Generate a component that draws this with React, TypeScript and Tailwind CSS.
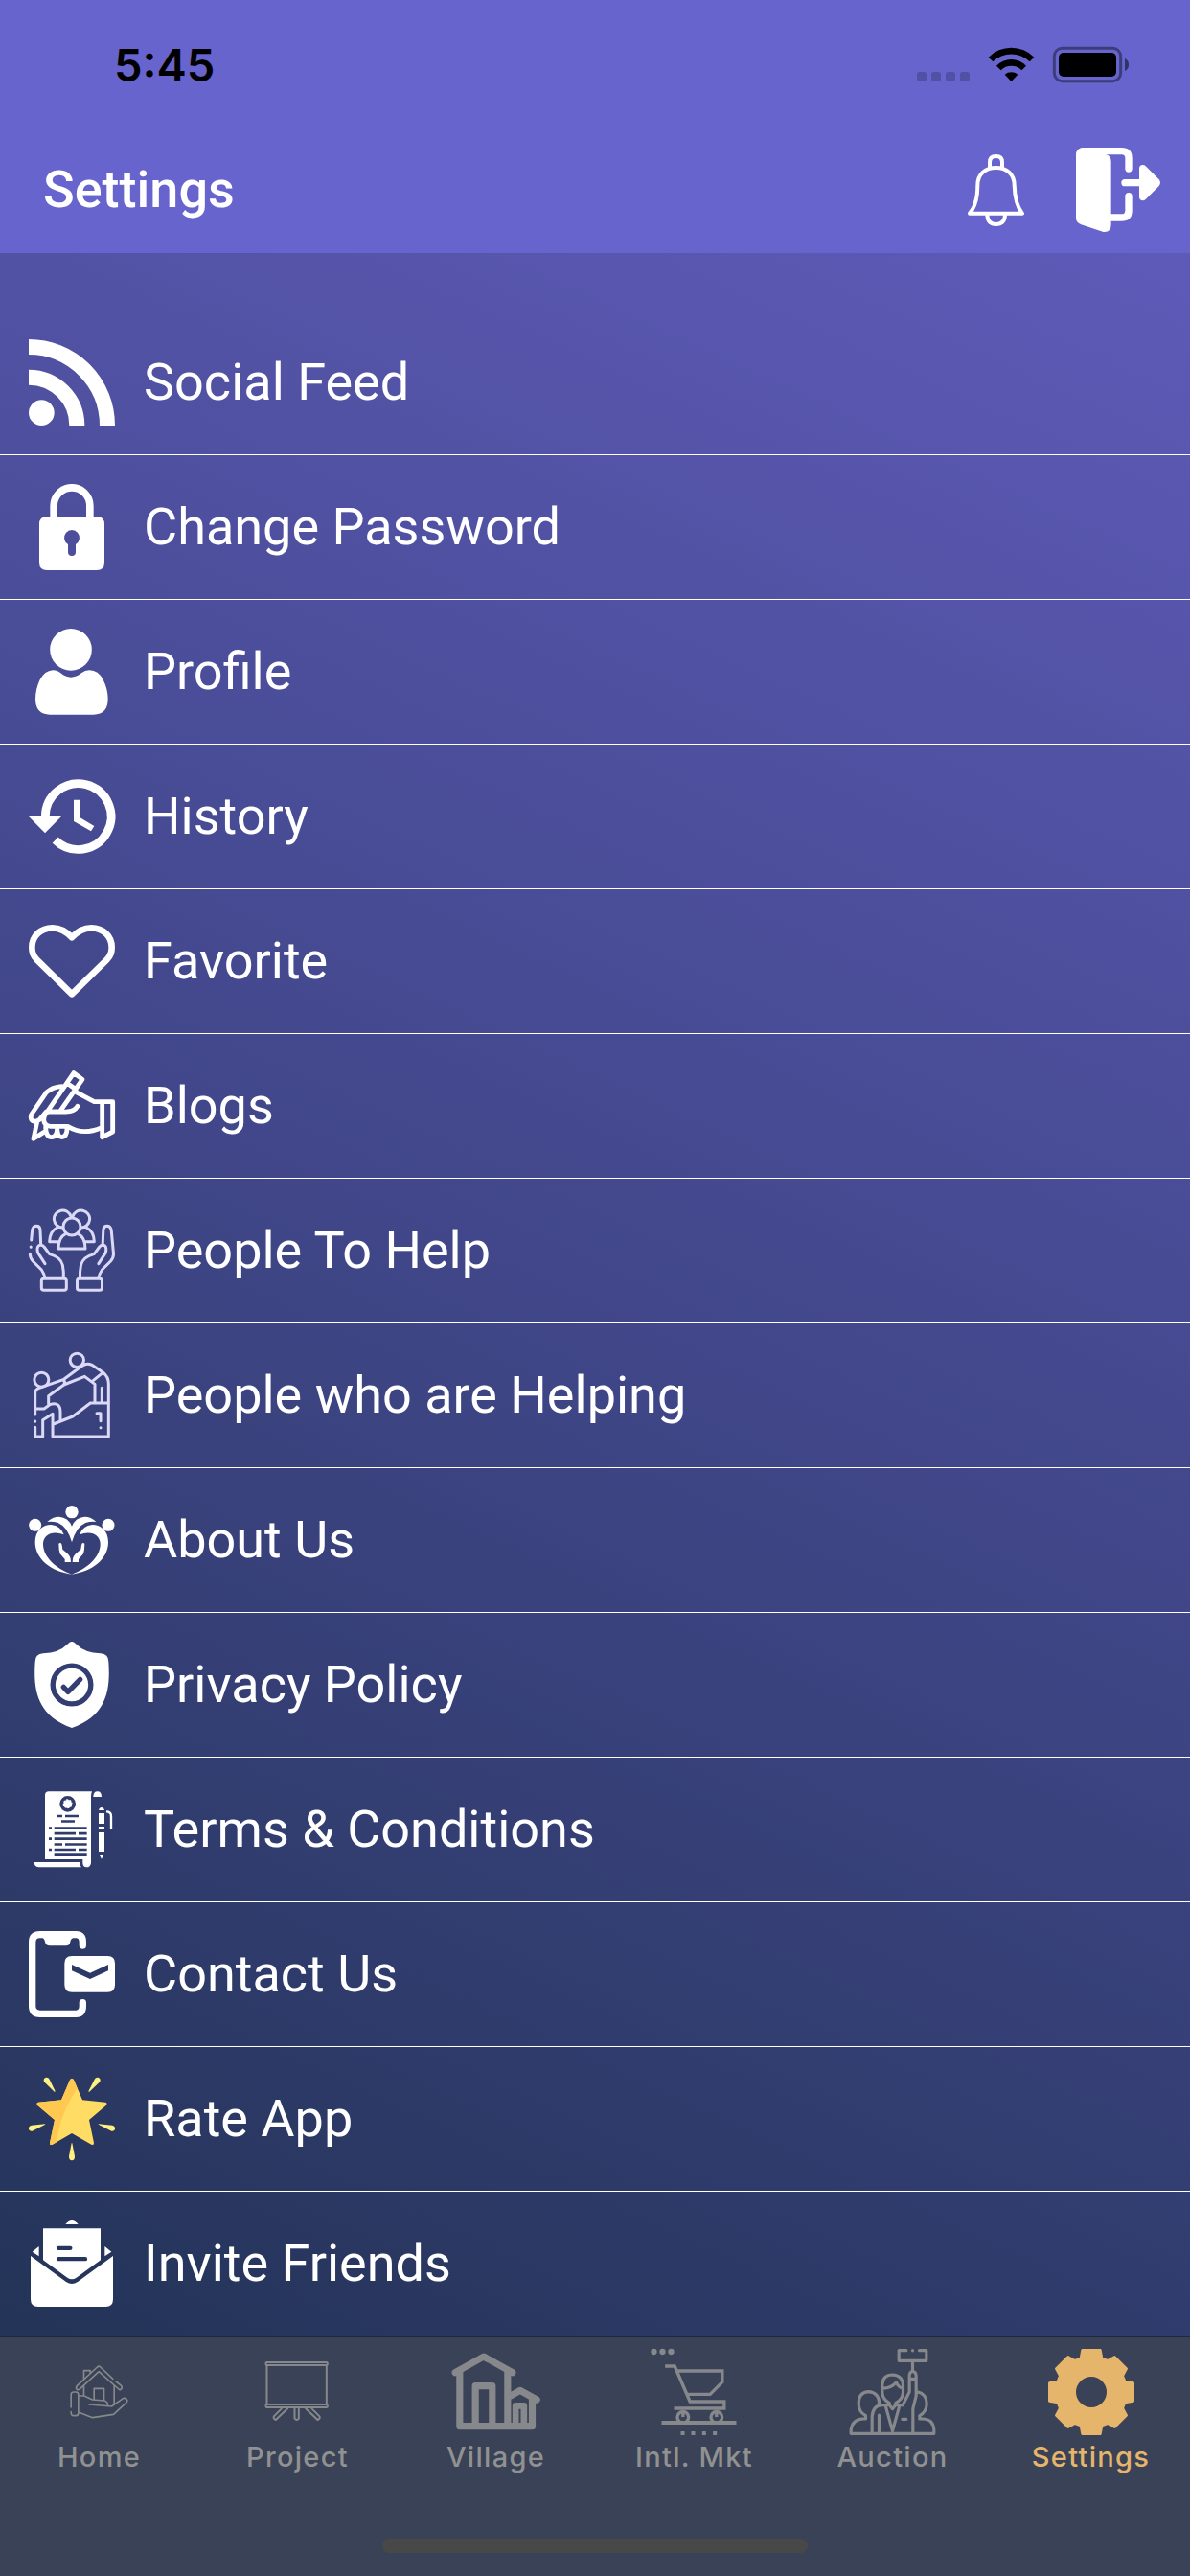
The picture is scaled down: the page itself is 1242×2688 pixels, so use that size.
import type { ReactNode } from "react";

type IconProps = { box: string; children: ReactNode; size?: string };

function Icon({ box, children, size = "size-[90px]" }: IconProps) {
  return (
    <svg viewBox={box} className={size + " shrink-0 overflow-visible"} fill="currentColor" aria-hidden="true">
      {children}
    </svg>
  );
}

type LineProps = { w: number; d: string; butt?: boolean };

function Line({ w, d, butt }: LineProps) {
  return (
    <path
      d={d}
      fill="none"
      stroke="currentColor"
      strokeWidth={w}
      strokeLinecap={butt ? "butt" : "round"}
      strokeLinejoin={butt ? "miter" : "round"}
    />
  );
}

const FeedIcon = () => (
  <Icon box="90 72 270 270">
    <Line butt w={48} d="M90 96A246 246 0 0 1 336 342M90 191A151 151 0 0 1 241 342" />
    <circle cx="130" cy="302" r="40" />
  </Icon>
);

const LockIcon = () => (
  <Icon box="90 525 270 270">
    <Line butt w={23} d="M168.500 632V593A56.500 56.500 0 0 1 281.500 593V632" />
    <path
      fillRule="evenodd"
      d="M147 627H303Q327 627 327 651V771Q327 795 303 795H147Q123 795 123 771V651Q123 627 147 627ZM213 714V738A12 12 0 0 0 237 738V714A24 24 0 1 0 213 714Z"
    />
  </Icon>
);

const ProfileIcon = () => (
  <Icon box="90 978 270 270">
    <circle cx="222" cy="1043.500" r="65.500" />
    <path d="M165 1108Q180 1108 190 1117Q222 1143 255 1117Q266 1108 280 1108Q308 1108 323 1138Q338 1168 338 1198Q338 1247 293 1247H156Q111 1247 111 1198Q111 1168 125 1138Q140 1110 165 1108Z" />
  </Icon>
);

const HistoryIcon = () => (
  <Icon box="90 81 270 270">
    <Line butt w={26} d="M142 218A103 103 0 1 1 173 290" />
    <path d="M90 216H192L141 268ZM231 164H251V220L295 246L285 262L231 231Z" />
  </Icon>
);

const HeartIcon = () => (
  <Icon box="90 534 270 270">
    <Line
      w={20}
      d="M225 772L115 664Q100 648 100 626C100 590 128 565 164 565Q198 565 225 595Q252 565 286 565C322 565 350 590 350 626Q350 648 335 664Z"
    />
  </Icon>
);

const BlogIcon = () => (
  <Icon box="90 987 270 270">
    <Line
      w={14.5}
      d="M148 1140L231 1019L258 1039L190 1136M212 1052L238 1070M194 1061Q163 1063 145 1080L98 1149Q92 1170 112 1171L124 1165L143 1142M146 1140H200Q232 1142 243 1123M238 1079L295 1109H353V1203L320 1220V1109M318 1190Q258 1216 212 1186H158Q137 1184 137 1164Q138 1150 148 1142M116 1172L105 1225L138 1204M143 1188Q144 1220 161 1220Q179 1220 179 1192Q180 1220 194 1220Q210 1218 210 1192"
    />
  </Icon>
);

const HandLeft = () => (
  <Line
    w={9}
    d="M141 266L119 232Q114 215 122 209Q131 205 138 213L155 236Q190 245 196 270Q200 290 199 312M94 235Q94 248 103 258L130 285Q139 298 141 312M138 313H201Q208 313 208 320V342Q208 349 201 349H138Q130 349 130 342V320Q130 313 138 313Z"
  />
);

const PeopleIcon = () => (
  <Icon box="90 90 270 270">
    <g className="text-[#dcd9f8]">
      <HandLeft />
      <Line w={9} d="M98 192L101 160Q104 148 114 148Q125 148 126 160L128 205M96.500 213V213.500" />
      <g transform="translate(449.500 0) scale(-1 1)">
        <HandLeft />
        <Line w={9} d="M94 235L101 160Q104 148 114 148Q125 148 126 160L128 205" />
      </g>
      <circle cx="225" cy="150" r="27" fill="none" stroke="currentColor" strokeWidth="9" />
      <Line
        w={9}
        d="M196 153A27 27 0 1 1 222 118M254 153A27 27 0 1 0 228 118M179 153Q156 164 155 197H186M271 153Q294 164 295 197H264M205 173Q183 184 183 219H267Q267 184 245 173"
      />
    </g>
  </Icon>
);

const HelpingIcon = () => (
  <Icon box="90 543 270 270">
    <g className="text-[#dcd9f8]">
      <g fill="none" stroke="currentColor" strokeWidth="9">
        <circle cx="130" cy="629" r="22.500" />
        <circle cx="241" cy="568" r="21.500" />
      </g>
      <Line
        w={9}
        d="M110 738V672Q110 659 123 655L198 629L258 585Q272 575 288 583L322 606Q340 620 340 642V807H165V736L134 755V807H110V778M110 759V759.500M110 720H138L158 706Q189 698 189 730V757M198 629Q206 637 200 645L152 680V706M200 645L265 619L297 643V700M288 635L322 607M167 768L228 744L283 702H340M319 655V700M303 734H315V758M315 779V779.500"
      />
    </g>
  </Icon>
);

const AboutHalf = () => (
  <>
    <circle cx="110" cy="184" r="19.500" />
    <path d="M225 338C160 330 110 290 110 238C110 200 135 183 160 183Q190 186 200 214Q180 206 165 209C145 212 134 228 135 246C137 285 175 320 225 338Z" />
    <path d="M184 242Q192 237 194 247L196 260L211 273Q222 282 222 300H203V291L188 274Q184 262 184 242Z" />
  </>
);

const AboutIcon = () => (
  <Icon box="90 96 270 270">
    <circle cx="225" cy="143" r="20" />
    <AboutHalf />
    <g transform="translate(449 0) scale(-1 1)">
      <AboutHalf />
    </g>
    <path d="M148 174Q165 158 185 158Q214 160 225 188Q236 160 265 158Q285 158 301 174Q284 172 268 177Q238 190 225 238Q212 190 182 177Q165 172 148 174Z" />
  </Icon>
);

const ShieldIcon = () => (
  <Icon box="90 549 270 270">
    <mask id="shield-check" maskUnits="userSpaceOnUse" x="90" y="549" width="270" height="270">
      <rect x="90" y="549" width="270" height="270" fill="white" />
      <g fill="none" stroke="black" strokeWidth="16">
        <circle cx="225" cy="684" r="59.500" />
        <path d="M199 691L213 706L251 667" strokeLinecap="round" strokeLinejoin="round" />
      </g>
    </mask>
    <path
      mask="url(#shield-check)"
      d="M225 548Q232 549 240 558Q265 584 315 586Q340 588 340 612C346 700 335 780 225 819C115 780 104 700 110 612Q110 588 135 586Q185 584 210 558Q218 549 225 548Z"
    />
  </Icon>
);

const TermsIcon = () => (
  <Icon box="90 102 270 270">
    <mask id="terms-lines" maskUnits="userSpaceOnUse" x="90" y="102" width="270" height="270">
      <rect x="90" y="102" width="270" height="270" fill="white" />
      <g fill="none" stroke="black" strokeWidth="8">
        <circle cx="212" cy="157" r="20" strokeWidth="10" />
        <circle cx="212" cy="157" r="15" strokeWidth="4" strokeDasharray="5 6.780" />
        <path d="M178 195H195M204 195H246M192 211.500H234M153 232.500H162M170 232.500H272M170 249.500H237M246 249.500H272M153 266H162M170 266H272M170 283.500H195M204 283.500H272M153 300H162M170 300H237M246 300H272M170 317H272" />
      </g>
    </mask>
    <path
      mask="url(#terms-lines)"
      d="M141 130Q141 118 153 118H288Q285 125 285 135V341Q283 355 271 355Q259 353 259 341V330H141Z"
    />
    <path d="M107 339H249Q249 350 255 355H121Q107 353 107 339ZM292 135Q292 118 305 118Q318 118 318 135ZM309 186H327V219H309ZM309 228H327V237H309ZM309 246H327V309H309ZM312 318H324L318 329ZM309 177Q311 168 318 168Q325 168 327 177Z" />
    <Line butt w={7} d="M333 181Q348 181 348 195V237" />
  </Icon>
);

const ContactIcon = () => (
  <Icon box="90 555 270 270">
    <Line w={22} d="M259 600V590Q259 566 238 566H125Q101 566 101 590V790Q101 814 125 814H238Q259 814 259 790V779" />
    <path d="M124 570Q139 576 141 588Q143 601 156 601H206Q219 601 220 588Q222 576 237 574V562H124Z" />
    <path
      fillRule="evenodd"
      d="M225 633H337Q360 633 360 656V723Q360 746 337 746H225Q202 746 202 723V656Q202 633 225 633ZM225 660V679L282 705L339 679V660L282 686Z"
    />
  </Icon>
);

const StarIcon = () => (
  <Icon box="90 108 270 270">
    <clipPath id="star-shape">
      <path d="M219 121Q225 112 231 121L258 184L330 191Q338 193 333 200L279 246L294 318Q294 327 286 323L225 288L164 323Q155 327 156 318L171 246L117 200Q112 193 120 191L192 184Z" />
    </clipPath>
    <g clipPath="url(#star-shape)">
      <rect x="100" y="108" width="250" height="230" fill="#ffdc64" />
      <path d="M100 100H225L243 147Q187 225 175 330H100Z" fill="#ffc850" />
    </g>
    <path
      fill="#fff082"
      d="M171 159L138 127Q134 117 144 113Q152 112 155 119L173 157ZM279 159L313 127Q317 117 307 113Q299 112 296 119L277 157ZM141 259L98 263Q88 266 90 276Q93 283 101 281L142 260ZM309 259L352 263Q362 266 360 276Q357 283 349 281L308 260ZM224 319L216 360Q216 373 225 373Q234 373 234 360L226 319Z"
    />
  </Icon>
);

const InviteIcon = () => (
  <Icon box="90 561 270 270">
    <path d="M96 672L207 753Q225 765 243 753L354 672V808Q354 831 331 831H119Q96 831 96 808Z" />
    <path
      fillRule="evenodd"
      d="M135 586H315V685L238 741Q225 749 212 741L135 685ZM183 641A6.500 6.500 0 0 0 183 654H220A6.500 6.500 0 0 0 220 641ZM183 675A6.500 6.500 0 0 0 183 688H267A6.500 6.500 0 0 0 267 675Z"
    />
    <path d="M101 659L122 642V673ZM349 659L328 642V673ZM205 573Q225 549 245 573Z" />
  </Icon>
);

const HomeIcon = () => (
  <Icon box="175.500 93 270 270">
    <Line
      w={5}
      d="M221 276V236Q221 228 229 228H236Q244 228 244 236V294Q244 302 236 302H229Q221 302 221 290M240 221Q234 215 240 208L303 150Q308 145 313 150L352 187M240 221Q246 222 250 217L308 164L370 219Q375 224 380 216Q381 211 378 208L362 195M261 188V161H281V170M261 209V238M356 208V266M293 251V217H324V254M246 240H262L288 252L325 255Q336 258 336 270M278 267L348 273L384 248Q394 245 397 254Q397 259 393 262L354 298L288 308L246 292"
    />
  </Icon>
);

const ProjectIcon = () => (
  <Icon box="796.500 93 270 270">
    <Line
      w={6}
      d="M834 135H1021Q1024 135 1024 138V141Q1024 144 1021 144H834Q831 144 831 141V138Q831 135 834 135ZM834 146V267M1021 146V267M834 267H1021Q1024 267 1024 270V273Q1024 276 1021 276H834Q831 276 831 273V270Q831 267 834 267ZM880 280L856 304Q853 312 862 315L899 280M921 280V311Q928 319 934 311V280M975 280L999 304Q1002 312 993 315L956 280"
    />
  </Icon>
);

const VillageIcon = () => (
  <Icon box="217.500 93 270 270">
    <Line
      w={21.500}
      d="M224 167L313 117L403 167M238 168V335H465V252M388 168V335M287 335V209H340V335M392 243L427 223L479 252"
    />
    <Line w={20} d="M413 335V271H439V335" />
  </Icon>
);

const CartIcon = () => (
  <Icon box="838.500 93 270 270">
    <circle cx="846" cy="102" r="9.500" />
    <circle cx="873" cy="102" r="9.500" />
    <circle cx="900" cy="102" r="9.500" />
    <Line butt w={10} d="M881 147H911L959 258H1066V279H909M918 162H1060V197L1022 235H950M937 290V306M1042 290V306" />
    <g fill="none" stroke="currentColor" strokeWidth="10">
      <circle cx="937" cy="307" r="17.500" />
      <circle cx="1042" cy="307" r="17.500" />
    </g>
    <path d="M870 318H1104V330H870ZM930 351H942V363H930ZM963 351H975V363H963ZM997 351H1009V363H997ZM1031 351H1043V363H1031Z" />
  </Icon>
);

const AuctionIcon = () => (
  <Icon box="199.500 93 270 270">
    <Line
      w={9.500}
      d="M203 358H463M203 358V348Q206 314 240 312H249V302Q226 290 227 262Q228 228 259 227Q292 230 292 268M301 217V205Q303 174 333 174Q364 176 366 205V230Q364 252 343 262V268L333 281L323 268V262Q303 252 301 230ZM301 217Q331 215 345 197Q350 212 366 217M269 358V305Q272 270 300 269H323M291 300V355M312 274L333 350L354 274M343 269H365L386 228V180Q386 164 396 164Q407 164 407 180V240L397 280V356M386 187H407M396 162V134M376 98H353V130H439V98H417M396 98V98.500M411 227Q440 234 440 264Q440 290 418 302V312H430Q462 314 463 348V358M364 313H376"
    />
  </Icon>
);

const GearIcon = () => (
  <Icon box="820.500 93 270 270">
    <path
      transform="translate(955.500 228)"
      fillRule="evenodd"
      stroke="currentColor"
      strokeWidth="8"
      strokeLinejoin="round"
      d="M-28 -131L28 -131L33 -105L51 -98L73 -110L110 -73L98 -51L105 -33L131 -28L131 28L105 33L98 51L110 73L73 110L51 98L33 105L28 131L-28 131L-33 105L-51 98L-73 110L-110 73L-98 51L-105 33L-131 28L-131 -28L-105 -33L-98 -51L-110 -73L-73 -110L-51 -98L-33 -105ZM52 0A52 52 0 1 0 -52 0A52 52 0 1 0 52 0Z"
    />
  </Icon>
);

const BellIcon = () => (
  <Icon box="303 477 234 234" size="size-[78px]">
    <Line
      w={12}
      d="M399 524V508Q399 489 418.500 489Q438 489 438 508V524M336 668Q361 640 361 580C361 545 385 525 418.500 525C452 525 476 545 476 580Q478 640 501 668ZM391 674Q393 702 418.500 702Q445 702 447 674"
    />
  </Icon>
);

const LogoutIcon = () => (
  <Icon box="666 459 270 270">
    <Line w={22} d="M692 473H812Q834 473 834 495V528M772 681H812Q834 681 834 659V614M822 572H872" />
    <path d="M669 486Q669 462 693 462L760 482Q779 486 779 506V703Q779 728 755 726L685 703Q669 697 669 682Z" />
    <path d="M867 528Q867 516 878 516Q883 516 887 520L929 562Q937 572 929 582L887 624Q883 628 878 628Q867 627 867 616Z" />
  </Icon>
);

const StatusIcons = () => (
  <svg viewBox="168 144 669 117" className="h-[39px] w-[223px]" aria-hidden="true">
    <g fillOpacity="0.2">
      <rect x="171" y="225" width="30" height="30" rx="8" />
      <rect x="216" y="225" width="30" height="30" rx="8" />
      <rect x="261" y="225" width="30" height="30" rx="8" />
      <rect x="306" y="225" width="30" height="30" rx="8" />
    </g>
    <path d="M395 179A101 101 0 0 1 538 179L524 193A82 82 0 0 0 409 193ZM420 206A64 64 0 0 1 513 206L499 220A46 46 0 0 0 434 220ZM446 233A32 32 0 0 1 487 233L466.500 255Z" />
    <rect x="601" y="151" width="208" height="103" rx="25" fill="none" stroke="#000" strokeOpacity="0.400" strokeWidth="9" />
    <rect x="615" y="165" width="180" height="75" rx="15" />
    <path d="M822 183Q834 188 834 202Q834 217 822 222Z" fillOpacity="0.500" />
  </svg>
);

const rows = [
  { label: "Social Feed", icon: <FeedIcon /> },
  { label: "Change Password", icon: <LockIcon /> },
  { label: "Profile", icon: <ProfileIcon /> },
  { label: "History", icon: <HistoryIcon /> },
  { label: "Favorite", icon: <HeartIcon /> },
  { label: "Blogs", icon: <BlogIcon /> },
  { label: "People To Help", icon: <PeopleIcon /> },
  { label: "People who are Helping", icon: <HelpingIcon /> },
  { label: "About Us", icon: <AboutIcon /> },
  { label: "Privacy Policy", icon: <ShieldIcon /> },
  { label: "Terms & Conditions", icon: <TermsIcon /> },
  { label: "Contact Us", icon: <ContactIcon /> },
  { label: "Rate App", icon: <StarIcon /> },
  { label: "Invite Friends", icon: <InviteIcon /> },
];

const tabs = [
  { label: "Home", icon: <HomeIcon /> },
  { label: "Project", icon: <ProjectIcon /> },
  { label: "Village", icon: <VillageIcon /> },
  { label: "Intl. Mkt", icon: <CartIcon /> },
  { label: "Auction", icon: <AuctionIcon /> },
  { label: "Settings", icon: <GearIcon />, active: true },
];

export default function App() {
  return (
    <div className="flex h-[2688px] w-[1242px] flex-col overflow-hidden bg-[linear-gradient(204.8deg,#645ec1_0%,#41478a_50%,#1e304e_100%)] font-['Roboto',sans-serif] text-white">
      <header className="h-[264px] shrink-0 bg-[#6764ce]">
        <div className="flex h-[132px] items-start justify-between pr-[63px] pl-[119px] text-black">
          <span className="mt-[40px] font-['Inter',sans-serif] text-[47px] leading-[56px] font-semibold">5:45</span>
          <div className="mt-12">
            <StatusIcons />
          </div>
        </div>
        <div className="flex h-[132px] items-center pr-[30px] pl-[45px]">
          <h1 className="flex-1 text-[54px] leading-none font-medium">Settings</h1>
          <BellIcon />
          <div className="ml-[43px]">
            <LogoutIcon />
          </div>
        </div>
      </header>

      <ul className="shrink-0 pt-[60px]">
        {rows.map((row) => (
          <li key={row.label} className="flex h-[151px] items-center gap-[30px] border-b border-white px-[30px] last:border-transparent">
            {row.icon}
            <span className="text-[54px] leading-[64px]">{row.label}</span>
          </li>
        ))}
      </ul>

      <nav className="flex h-[250px] shrink-0 flex-col items-center justify-between border-t border-[#1f2945] bg-[#394256] pb-6 font-['Inter',sans-serif]">
        <div className="grid w-full grid-cols-6">
          {tabs.map((tab) => (
            <div
              key={tab.label}
              className={
                tab.active
                  ? "flex flex-col items-center pt-3 text-[#e6b56c]"
                  : "flex flex-col items-center pt-3 text-[#87888b]"
              }
            >
              {tab.icon}
              <span
                className={
                  tab.active
                    ? "mt-[5px] text-[29px] leading-9 font-[450] tracking-[1.3px]"
                    : "mt-[5px] text-[29px] leading-9 font-[450] tracking-[1.3px] text-[#919191]"
                }
              >
                {tab.label}
              </span>
            </div>
          ))}
        </div>
        <div className="h-[15px] w-[444px] rounded-full bg-[#484848]" />
      </nav>
    </div>
  );
}
